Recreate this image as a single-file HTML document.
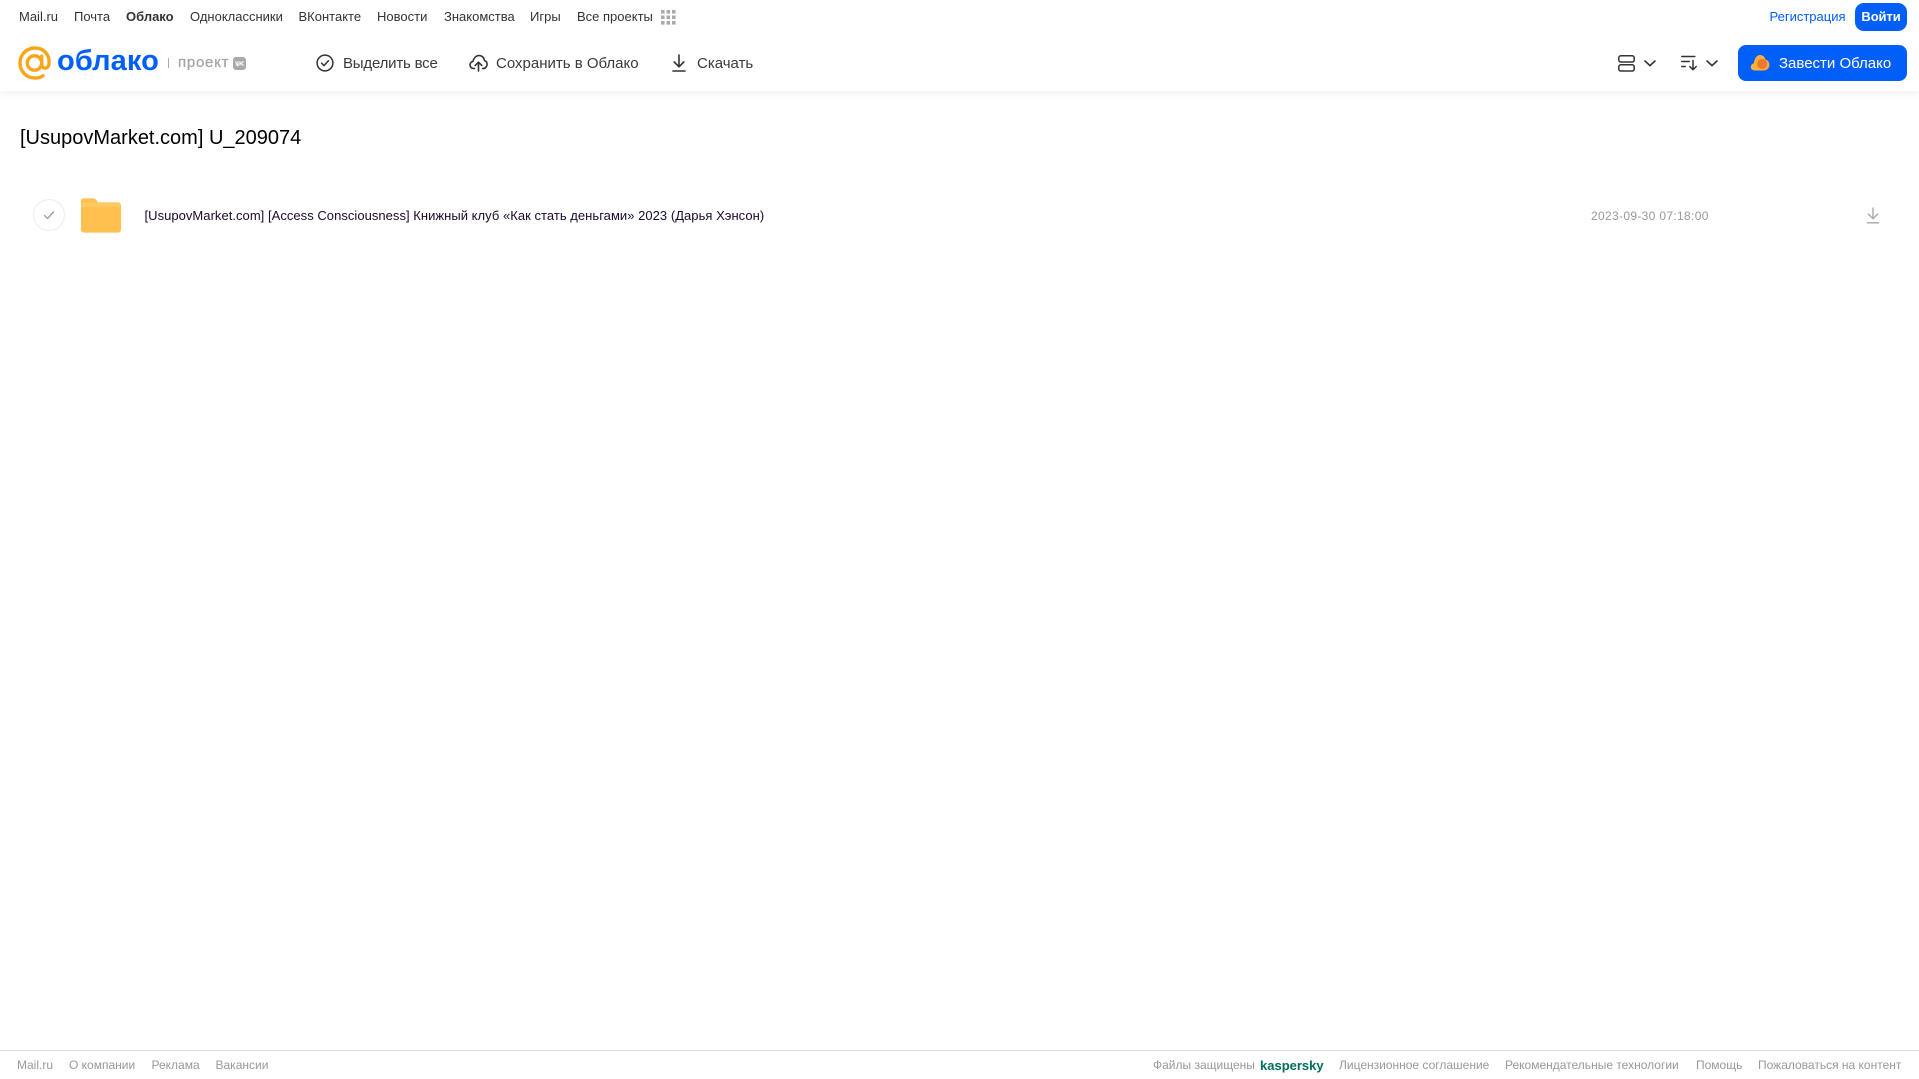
<!DOCTYPE html>
<html lang="ru">
<head>
<meta charset="utf-8">
<title>[UsupovMarket.com] U_209074</title>
<style>
html,body{margin:0;padding:0;background:#fff;}
body{position:relative;width:1919px;height:1079px;overflow:hidden;font-family:"Liberation Sans",Arial,sans-serif;color:#333;}
a,span.t{position:absolute;white-space:nowrap;text-decoration:none;display:block;}
svg{position:absolute;display:block;}
.top{top:9px;font-size:13px;line-height:16px;color:#333;}
.tool{top:55px;font-size:15px;line-height:18px;color:#3a3a3a;}
.foot{top:1058px;font-size:12px;line-height:15px;color:#999;}
#hdr{position:absolute;left:0;top:0;width:1919px;height:91px;background:#fff;box-shadow:0 2px 8px rgba(0,0,0,.07);}
#fl{position:absolute;left:0;top:1050px;width:1919px;height:1px;background:#dcdcdc;}
#btn1{position:absolute;left:1855px;top:3px;width:52px;height:28px;border-radius:9px;background:#005ff9;color:#fff;font-size:13px;font-weight:bold;line-height:28px;text-align:center;letter-spacing:-.1px;}
#btn2{position:absolute;left:1738px;top:45px;width:169px;height:36px;border-radius:8px;background:#005ff9;}
#btn2 span{position:absolute;left:41px;top:10px;font-size:15px;line-height:18px;color:#fff;white-space:nowrap;}
</style>
</head>
<body>
<div id="hdr"></div>
<a class="top" style="left:19px">Mail.ru</a>
<a class="top" style="left:74px">Почта</a>
<a class="top" style="left:126px;font-weight:bold">Облако</a>
<a class="top" style="left:190px">Одноклассники</a>
<a class="top" style="left:298.500px">ВКонтакте</a>
<a class="top" style="left:377px">Новости</a>
<a class="top" style="left:444px">Знакомства</a>
<a class="top" style="left:530px">Игры</a>
<a class="top" style="left:577px">Все проекты</a>
<svg style="left:661px;top:10px" width="15" height="15" viewBox="0 0 15 15" fill="#aaa"><rect x="0" y="0" width="3.6" height="3.6"/><rect x="5.5" y="0" width="3.6" height="3.6"/><rect x="11" y="0" width="3.6" height="3.6"/><rect x="0" y="5.5" width="3.6" height="3.6"/><rect x="5.5" y="5.5" width="3.6" height="3.6"/><rect x="11" y="5.5" width="3.6" height="3.6"/><rect x="0" y="11" width="3.6" height="3.6"/><rect x="5.5" y="11" width="3.6" height="3.6"/><rect x="11" y="11" width="3.6" height="3.6"/></svg>
<a class="top" style="left:1769.500px;color:#005ff9">Регистрация</a>
<a id="btn1">Войти</a>

<svg style="left:18px;top:46px" width="34" height="34" viewBox="0 0 34 34" fill="none" stroke="#f9a51a" stroke-width="3.4"><circle cx="16.500" cy="17" r="7.200"/><path d="M23.700 10.200V18.500c0 5 6.600 5 7.300-.5C32 9 26 2 17 2 8.500 2 2 8.600 2 17s6.500 15 15 15c3.200 0 5.600-.7 8-2.200" stroke-linecap="round"/></svg>
<span class="t" style="left:57px;top:41px;font-size:29px;line-height:40px;font-weight:bold;color:#005ff9;letter-spacing:.1px">облако</span>
<div style="position:absolute;left:168px;top:58px;width:1px;height:10px;background:#aaa"></div>
<span class="t" style="left:178px;top:54px;font-size:15px;line-height:18px;color:#a6a6a6;letter-spacing:.75px;-webkit-text-stroke:.3px #a6a6a6">проект</span>
<svg style="left:233px;top:57px" width="13" height="13" viewBox="0 0 13 13"><rect width="13" height="13" rx="3" fill="#aaa"/><path d="M2.600 4.400l1.600 4.200h.8V4.400M10.400 4.400L8 6.400l2.600 2.200M7 4.200v4.400" stroke="#fff" stroke-width="1.100" fill="none"/></svg>

<svg style="left:316px;top:54px" width="18" height="18" viewBox="0 0 18 18" fill="none" stroke="#333" stroke-width="1.500"><circle cx="9" cy="9" r="7.900"/><path d="M5.600 9.200l2.400 2.400 4.400-4.800" stroke-linecap="round" stroke-linejoin="round"/></svg>
<a class="tool" style="left:343px;letter-spacing:-.2px">Выделить все</a>

<svg style="left:469px;top:54px" width="19" height="18" viewBox="0 0 19 18" fill="none" stroke="#333" stroke-width="1.600" stroke-linecap="round" stroke-linejoin="round"><path d="M5.500 14.500H4.600C2.500 14.500 1 12.800 1 11c0-1.900 1.300-3.300 3-3.600C4.500 4.200 7 1.500 10 1.500c3 0 5.200 2.300 5.500 5 1.500.6 2.600 2 2.600 3.700 0 2.200-1.600 4.300-4.100 4.300h-.5"/><path d="M9.500 17V8.500M6.200 11.400l3.300-3.200 3.300 3.200"/></svg>
<a class="tool" style="left:496px">Сохранить в Облако</a>

<svg style="left:672px;top:54px" width="14" height="18" viewBox="0 0 14 18" fill="none" stroke="#333" stroke-width="1.600" stroke-linecap="round" stroke-linejoin="round"><path d="M7 1v11.500M2.200 8l4.800 4.800L11.800 8M1 17h12"/></svg>
<a class="tool" style="left:697px">Скачать</a>

<svg style="left:1618px;top:55px" width="17" height="17" viewBox="0 0 17 17" fill="none" stroke="#333" stroke-width="1.500"><rect x=".8" y=".8" width="15.400" height="6.200" rx="2"/><rect x=".8" y="9.800" width="15.400" height="6.200" rx="2"/></svg>
<svg style="left:1644px;top:60px" width="12" height="7" viewBox="0 0 12 7" fill="none" stroke="#333" stroke-width="1.600" stroke-linecap="round" stroke-linejoin="round"><path d="M1 1l5 4.600L11 1"/></svg>
<svg style="left:1681px;top:55px" width="17" height="16" viewBox="0 0 17 16" fill="none" stroke="#333" stroke-width="1.500" stroke-linecap="round" stroke-linejoin="round"><path d="M.8 1.500h13M.8 6.500h7.500M.8 11.500h3.500M12 5.500v9M8.800 11.500l3.200 3.200 3.200-3.200"/></svg>
<svg style="left:1706px;top:60px" width="12" height="7" viewBox="0 0 12 7" fill="none" stroke="#333" stroke-width="1.600" stroke-linecap="round" stroke-linejoin="round"><path d="M1 1l5 4.600L11 1"/></svg>

<a id="btn2"><span>Завести Облако</span></a>
<svg style="left:1750px;top:54px" width="20" height="17" viewBox="0 0 20 17"><path d="M5 16.500C2 16.500.6 14.800.8 12.800c.2-2 1.600-3.100 3-3.400C4.400 5 6.500 1 10 1c3 0 5 2.200 5.400 4.600C18 6 19.400 8.500 19.400 11c0 3-2.400 5.500-6 5.500z" fill="#fbb03b"/><circle cx="12.200" cy="10" r="5" fill="#f2762a"/></svg>

<span class="t" style="left:20px;top:126px;font-size:20px;line-height:24px;color:#000">[UsupovMarket.com] U_209074</span>

<svg style="left:33px;top:199px" width="32" height="32" viewBox="0 0 32 32" fill="none"><circle cx="16" cy="16" r="15.500" stroke="#ededed"/><path d="M11.500 16.500l3 3 6-6.500" stroke="#a0a0a0" stroke-width="1.400" stroke-linecap="round" stroke-linejoin="round"/></svg>
<svg style="left:81px;top:198px" width="40" height="35" viewBox="0 0 41 35"><path d="M2.500 0h10c1.800 0 2.800 1 3.800 2.500L17.500 4H38c1.700 0 3 1.300 3 3v25c0 1.700-1.300 3-3 3H3c-1.700 0-3-1.300-3-3V2.500C0 1 1 0 2.500 0z" fill="#ffc04d"/><path d="M0 7c0-1.700 1.300-3 3-3h35c1.700 0 3 1.300 3 3v2H0z" fill="#ffcf70" opacity=".6"/></svg>
<a style="left:144.500px;top:208px;font-size:13px;line-height:16px;color:#1a0a2e;letter-spacing:.035px">[UsupovMarket.com] [Access Consciousness] Книжный клуб «Как стать деньгами» 2023 (Дарья Хэнсон)</a>
<span class="t" style="left:1591px;top:208.500px;font-size:12px;line-height:15px;color:#999;letter-spacing:.33px">2023-09-30 07:18:00</span>
<svg style="left:1866px;top:207px" width="14" height="17" viewBox="0 0 14 17" fill="none" stroke="#a8a8a8" stroke-width="1.400"><path d="M7 .5v11M2 6.800l5 4.900 5-4.900M.8 15.800h12.400"/></svg>

<div id="fl"></div>
<a class="foot" style="left:17px">Mail.ru</a>
<a class="foot" style="left:69px">О компании</a>
<a class="foot" style="left:151.500px">Реклама</a>
<a class="foot" style="left:215.500px">Вакансии</a>
<span class="t foot" style="left:1153px">Файлы защищены</span>
<span class="t foot" style="left:1260px;font-weight:bold;color:#006d5c;font-size:13px">kaspersky</span>
<a class="foot" style="left:1339px">Лицензионное соглашение</a>
<a class="foot" style="left:1505px">Рекомендательные технологии</a>
<a class="foot" style="left:1696px">Помощь</a>
<a class="foot" style="left:1758px">Пожаловаться на контент</a>
</body>
</html>
